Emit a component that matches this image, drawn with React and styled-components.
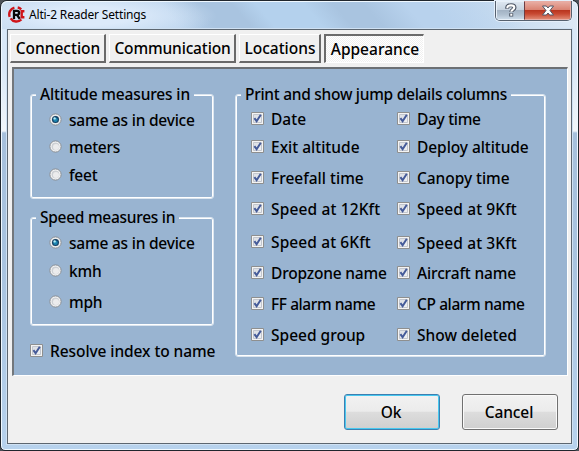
import React from "react";
import styled, { createGlobalStyle } from "styled-components";

const GlobalStyle = createGlobalStyle`
  * { box-sizing: border-box; }
  html, body { margin: 0; padding: 0; overflow: hidden; background: #4c5158; }
  body { font-family: "Noto Sans", "Open Sans", sans-serif; color: #000; }
`;

const WindowFrame = styled.main`
  width: 579px;
  height: 451px;
  padding: 0 6px 6px;
  border: 1px solid #20262d;
  border-radius: 7px 7px 5px 5px;
  box-shadow: inset 0 0 0 1px #eff8ff;
  background:
    linear-gradient(#d9e8f7 0 29px, #d9e8f7 65px, #f1f6fa 130px, #a6c0dc 132px, #a9c4e0 270px, #b7d2ed 100%);
`;

const TitleBar = styled.header`
  display: flex;
  height: 28px;
  margin: 0 -5px;
  padding-left: 5px;
  border-top: 1px solid #eff8ff;
  border-radius: 6px 6px 0 0;
  background:
    radial-gradient(ellipse 130px 26px at 85px 14px, #dceafa 0 35%, transparent 100%),
    linear-gradient(50deg, transparent 0 30%, #a9c4e0 36% 42%, #b4d1ed 46% 54%, #a9c4e0 59% 64%, #b8d2ed 71% 75%, transparent 88%),
    linear-gradient(90deg, #c4d9ef, #b4d0ec 50%, #c8dcf0 88%, #dce9f6);
`;

const Logo = styled.svg`
  width: 17px;
  height: 17px;
  margin: 4px 4px 0 1px;
`;

const Title = styled.h1`
  flex: 1;
  margin: 3px 0 0;
  font-size: 12px;
  font-weight: 400;
  line-height: 20px;
  letter-spacing: -0.17px;
`;

const Controls = styled.div`
  display: flex;
  width: 77px;
  height: 20px;
  margin: -1px 5px 0 0;
  overflow: hidden;
  border: 1px solid #56616f;
  border-top: 0;
  border-radius: 0 0 5px 5px;
  box-shadow: 0 0 0 1px #e5effa;
`;

const ControlButton = styled.button`
  display: flex;
  align-items: center;
  justify-content: center;
  width: ${(p) => (p.$close ? "47px" : "28px")};
  padding: 0;
  border: 1px solid ${(p) => (p.$close ? "#e7aca4" : "#e8f0f8")};
  border-right-width: ${(p) => (p.$close ? "1px" : "0")};
  border-left: 1px solid ${(p) => (p.$close ? "#6e3c42" : "#e8f0f8")};
  background: ${(p) =>
    p.$close
      ? "linear-gradient(#e8aca2 0, #d98170 48%, #b93620 50%, #c84932 70%, #df8670 100%)"
      : "linear-gradient(#dce6f0 0, #c6d2df 48%, #a3b3c4 50%, #b0c0d0 75%, #cbdae8 100%)"};
  svg { flex: none; width: 14px; height: 15px; }
`;

const Client = styled.section`
  height: 415px;
  padding: 4px 3px 0 2px;
  border: 1px solid #5c6670;
  background: #f0f0f0;
  box-shadow: 0 0 0 1px #cfe1f3;
`;

const Tabs = styled.nav`
  display: flex;
  gap: 3px;
  height: 29px;
`;

const Tab = styled.button`
  display: flex;
  justify-content: center;
  align-items: center;
  width: ${(p) => p.$width}px;
  height: 29px;
  padding: ${(p) => (p.$active ? "0 0 0 1px" : "0 0 0 1px")};
  border: solid;
  border-width: ${(p) => (p.$active ? "2px 1px 1px 2px" : "1px 2px 2px 1px")};
  border-color: ${(p) => (p.$active ? "#6b6b6b #fff #fff #6b6b6b" : "#fff #696969 #696969 #fff")};
  background: ${(p) =>
    p.$active ? "repeating-conic-gradient(#fff 0 25%, #f0f0f0 0 50%) 0 0 / 2px 2px" : "#f0f0f0"};
  font: 480 15.5px/22px "Noto Sans", sans-serif;
  letter-spacing: ${(p) => p.$tracking || 0}px;
  white-space: nowrap;
  color: #000;
`;

const Panel = styled.div`
  display: grid;
  grid-template-columns: 184px 311px;
  gap: 21px;
  height: 309px;
  margin: 4px 0 0 2px;
  padding: 25px 0 0 16px;
  border: solid;
  border-width: 2px 1px 1px 2px;
  border-color: #6c7074 #fff #fff #73777b;
  background: #99b4d1;
`;

const Column = styled.div`
  display: flex;
  flex-direction: column;
`;

const Group = styled.section`
  height: ${(p) => p.$height}px;
  margin-bottom: ${(p) => p.$after || 0}px;
  border: 1px solid #dbe5ef;
  border-radius: 3px;
  box-shadow: inset 0 0 0 1px #fff;
`;

const Legend = styled.h2`
  display: table;
  height: 22px;
  margin: -12px 0 0 5px;
  padding: 0 4px;
  background: #99b4d1;
  font-size: 15.5px;
  font-weight: 480;
  line-height: 22px;
  letter-spacing: ${(p) => p.$tracking || 0}px;
  white-space: nowrap;
`;

const Options = styled.div`
  display: grid;
  grid-template-columns: ${(p) => (p.$double ? "146px 146px" : "1fr")};
  grid-template-rows: ${(p) => p.$rows};
  padding: ${(p) => p.$top}px 0 0 ${(p) => (p.$double ? 15 : 18)}px;
`;

const Choice = styled.label`
  display: flex;
  align-items: center;
  gap: 7px;
  height: 13px;
  margin-top: ${(p) => (p.$lower ? "1px" : "0")};
  font-size: 15.5px;
  font-weight: 480;
  line-height: 22px;
  letter-spacing: ${(p) => p.$tracking || 0}px;
  white-space: nowrap;
  > svg { flex: none; }
`;

const RadioMark = styled.svg`
  width: 13px;
  height: 13px;
`;

const CheckMark = styled.svg`
  width: 13px;
  height: 13px;
`;

const Actions = styled.footer`
  display: flex;
  justify-content: flex-end;
  gap: 22px;
  padding: 18px 10px 0 0;
`;

const ActionButton = styled.button`
  width: 96px;
  height: 36px;
  padding: 0 2px 1px 0;
  border: 1px solid ${(p) => (p.$primary ? "#3c7fb1" : "#707070")};
  border-radius: 3px;
  box-shadow: inset 0 0 0 1px ${(p) => (p.$primary ? "#48c8ef" : "#fafafa")};
  background: linear-gradient(#f2f2f2 0, #ebebeb 48%, #dddddd 50%, #cfcfcf 100%);
  font: 480 15.5px/22px "Noto Sans", sans-serif;
  letter-spacing: -0.1px;
  color: #000;
`;

function Radio({ checked, children, tracking = -0.22 }) {
  return (
    <Choice $tracking={tracking}>
      <RadioMark viewBox="0 0 13 13">
        <circle cx="6.5" cy="6.5" r="5.6" fill="#f8f8f8" stroke="#8b8f94" />
        <circle cx="6.5" cy="6.5" r="4" fill="#cdd0d4" />
        <circle cx="7" cy="7" r="3" fill="#ececed" />
        {checked && (
          <>
            <circle cx="6.5" cy="6.5" r="3.5" fill="#123f63" />
            <circle cx="6.5" cy="6.8" r="2.3" fill="#1d86b1" />
            <circle cx="5.6" cy="5.4" r="1.2" fill="#b4ecf8" />
          </>
        )}
      </RadioMark>
      <span>{children}</span>
    </Choice>
  );
}

function Check({ children, lower, tracking }) {
  return (
    <Choice $lower={lower} $tracking={tracking}>
      <CheckMark viewBox="0 0 13 13">
        <path d="M.5.5h12v12H.5z" fill="#f4f4f4" stroke="#8e8f8f" />
        <path d="M2.5 2.5h8v8h-8z" fill="#dfe2e7" stroke="#c2c6ce" />
        <path d="M3 10h7V3z" fill="#eceef1" />
        <path d="m3.4 6.2 2.2 3L9.8 2.8" fill="none" stroke="#455b99" strokeWidth="2" />
      </CheckMark>
      <span>{children}</span>
    </Choice>
  );
}

const tabs = [
  { label: "Connection", width: 96 },
  { label: "Communication", width: 127, tracking: -0.15 },
  { label: "Locations", width: 82 },
  { label: "Appearance", width: 100, active: true },
];

const columns = [
  { label: "Date" },
  { label: "Day time", tracking: -0.3 },
  { label: "Exit altitude" },
  { label: "Deploy altitude", tracking: -0.07 },
  { label: "Freefall time" },
  { label: "Canopy time", tracking: -0.05 },
  { label: "Speed at 12Kft", tracking: 0.14 },
  { label: "Speed at 9Kft", tracking: 0.1 },
  { label: "Speed at 6Kft", tracking: 0.1 },
  { label: "Speed at 3Kft", tracking: 0.1, lower: true },
  { label: "Dropzone name", tracking: -0.2 },
  { label: "Aircraft name", tracking: -0.15 },
  { label: "FF alarm name", tracking: -0.42 },
  { label: "CP alarm name", tracking: -0.4 },
  { label: "Speed group" },
  { label: "Show deleted" },
];

export default function App() {
  return (
    <>
      <GlobalStyle />
      <WindowFrame>
        <TitleBar>
          <Logo viewBox="0 0 17 17">
            <path d="M13.2 3.3A7 7 0 0 0 9.7 1.5M6.4 1.6A7 7 0 0 0 1.7 10.8M2.6 12.3a7 7 0 0 0 10.8 1.2M16.4 5.3h-2.7v6h2.7" fill="none" stroke="#cf1419" strokeWidth="2.4" />
            <path d="M6 12.9V4.8h3.1a2 2 0 0 1 0 4H6m3 0 2.7 4.1" fill="none" stroke="#080808" strokeWidth="2.3" />
          </Logo>
          <Title>Alti-2 Reader Settings</Title>
          <Controls>
            <ControlButton aria-label="Help">
              <svg viewBox="0 0 14 15">
                <path d="M3.2 5.8V4.6C3.2 2.9 4.7 2.3 7 2.3s3.5.8 3.5 2.4c0 2.1-3.2 1.9-3.2 4.3M7.2 10.2v3.2" fill="none" stroke="#4d5665" strokeWidth="4" />
                <path d="M3.4 5.2v-.6C3.4 3 4.7 2.4 7 2.4s3.3.8 3.3 2.2c0 2-3 1.9-3 4.1M7.3 10.8v1.9" fill="none" stroke="#fff" strokeWidth="2.1" />
              </svg>
            </ControlButton>
            <ControlButton $close aria-label="Close">
              <svg viewBox="0 0 14 15">
                <path d="M1.5 3h3.8L7 5l1.7-2h3.8L9 7.5l3.5 4.5H8.7L7 10l-1.7 2H1.5L5 7.5z" fill="#fff" stroke="#505566" />
              </svg>
            </ControlButton>
          </Controls>
        </TitleBar>
        <Client>
          <Tabs>
            {tabs.map((t) => (
              <Tab key={t.label} $width={t.width} $active={t.active} $tracking={t.tracking}>
                {t.label}
              </Tab>
            ))}
          </Tabs>
          <Panel>
            <Column>
              <Group $height={105} $after={18}>
                <Legend $tracking={-0.15}>Altitude measures in</Legend>
                <Options $top={8} $rows="27px 28px 13px">
                  <Radio checked>same as in device</Radio>
                  <Radio>meters</Radio>
                  <Radio>feet</Radio>
                </Options>
              </Group>
              <Group $height={109} $after={18}>
                <Legend $tracking={-0.28}>Speed measures in</Legend>
                <Options $top={8} $rows="28px 31px 13px">
                  <Radio checked>same as in device</Radio>
                  <Radio>kmh</Radio>
                  <Radio>mph</Radio>
                </Options>
              </Group>
              <Check tracking={-0.08}>Resolve index to name</Check>
            </Column>
            <Group $height={263}>
              <Legend $tracking={-0.28}>Print and show jump delails columns</Legend>
              <Options $double $top={7} $rows="28px 31px 31px 33px 31px 31px 31px 13px">
                {columns.map(({ label, lower, tracking }) => (
                  <Check key={label} lower={lower} tracking={tracking}>{label}</Check>
                ))}
              </Options>
            </Group>
          </Panel>
          <Actions>
            <ActionButton $primary>Ok</ActionButton>
            <ActionButton>Cancel</ActionButton>
          </Actions>
        </Client>
      </WindowFrame>
    </>
  );
}
